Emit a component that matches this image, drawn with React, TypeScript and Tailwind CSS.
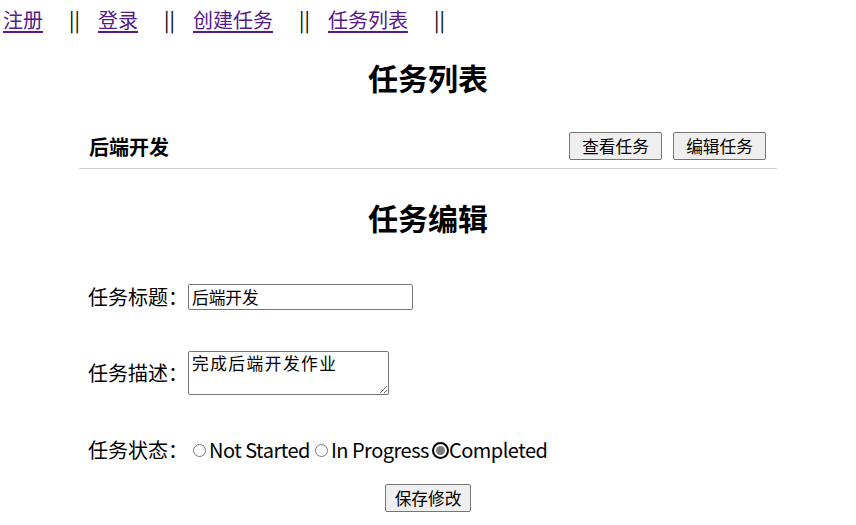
import { useState } from "react"

const navLinks = ["注册", "登录", "创建任务", "任务列表"]

const statuses = ["Not Started", "In Progress", "Completed"]

const btn = "h-[28px] w-[93px] border border-[#767676] bg-[#efefef] rounded-[2px] text-[16.7px] leading-[26px] text-black"

const Radio = ({ checked }: { checked: boolean }) =>
  checked ? (
    <span className="inline-flex items-center justify-center w-[17px] h-[17px] rounded-full bg-black">
      <span className="inline-flex items-center justify-center w-[13px] h-[13px] rounded-full bg-white">
        <span className="w-[9px] h-[9px] rounded-full bg-[#7c7c7c]" />
      </span>
    </span>
  ) : (
    <span className="inline-block w-[13px] h-[13px] rounded-full border border-[#767676] bg-white mx-[2px]" />
  )

export default function App() {
  const [status, setStatus] = useState("Completed")

  return (
    <div className="w-[856px] h-[525px] overflow-hidden bg-white text-black font-['Microsoft_YaHei','Noto_Sans_CJK_SC',sans-serif]">
      <nav className="flex mt-[7px] pl-[3px] h-[26px] text-[20px] leading-[26px]">
        {navLinks.map((l) => (
          <div key={l} className="flex">
            <a href="#" className="text-[#551a8b] underline underline-offset-[3px]">{l}</a>
            <span className="inline-block w-[8px] ml-[26px] mr-[21px] text-center">||</span>
          </div>
        ))}
      </nav>

      <h2 className="mt-[26px] h-[36px] text-center text-[30px] leading-[36px] font-bold">任务列表</h2>

      <div className="mx-auto w-[698px]">
        <div className="mt-[37px] flex items-end justify-between pl-[10px] pr-[11px] pb-[8px] border-b border-[#d0d0d0]">
          <span className="text-[20px] font-bold leading-[26px]">后端开发</span>
          <div className="flex gap-[11px]">
            <button className={btn}>查看任务</button>
            <button className={btn}>编辑任务</button>
          </div>
        </div>
      </div>

      <h2 className="mt-[30px] h-[36px] text-center text-[30px] leading-[36px] font-bold">任务编辑</h2>

      <form className="flex flex-col">
        <div className="mt-[49px] flex items-center pl-[88px] h-[26px]">
          <label className="w-[100px] text-[20px] leading-[26px]">任务标题：</label>
          <input
            defaultValue="后端开发"
            className="w-[225px] h-[26px] border border-[#767676] rounded-[2px] px-[3px] text-[16.7px] outline-none"
          />
        </div>

        <div className="mt-[41px] flex items-center pl-[88px]">
          <label className="w-[100px] text-[20px] leading-[26px]">任务描述：</label>
          <textarea
            defaultValue="完成后端开发作业"
            className="w-[201px] h-[44px] border border-[#767676] rounded-[2px] px-[3px] pt-0 text-[16.7px] leading-[22px] tracking-[1.5px] resize-y outline-none"
          />
        </div>

        <div className="mt-[42px] flex items-center pl-[88px] h-[26px] text-[20px] leading-[26px]">
          <label className="w-[100px]">任务状态：</label>
          <div className="flex items-center tracking-[-0.5px]">
            {statuses.map((s) => (
              <label key={s} className="flex items-center cursor-pointer ml-[3px]" onClick={() => setStatus(s)}>
                <Radio checked={status === s} />
                <span className={status === s ? "ml-0" : "ml-[1px]"}>{s}</span>
              </label>
            ))}
          </div>
        </div>

        <button type="button" className="mt-[21px] mx-auto h-[28px] w-[86px] border border-[#767676] bg-[#efefef] rounded-[2px] text-[16.7px] leading-[26px]">
          保存修改
        </button>
      </form>
    </div>
  )
}
